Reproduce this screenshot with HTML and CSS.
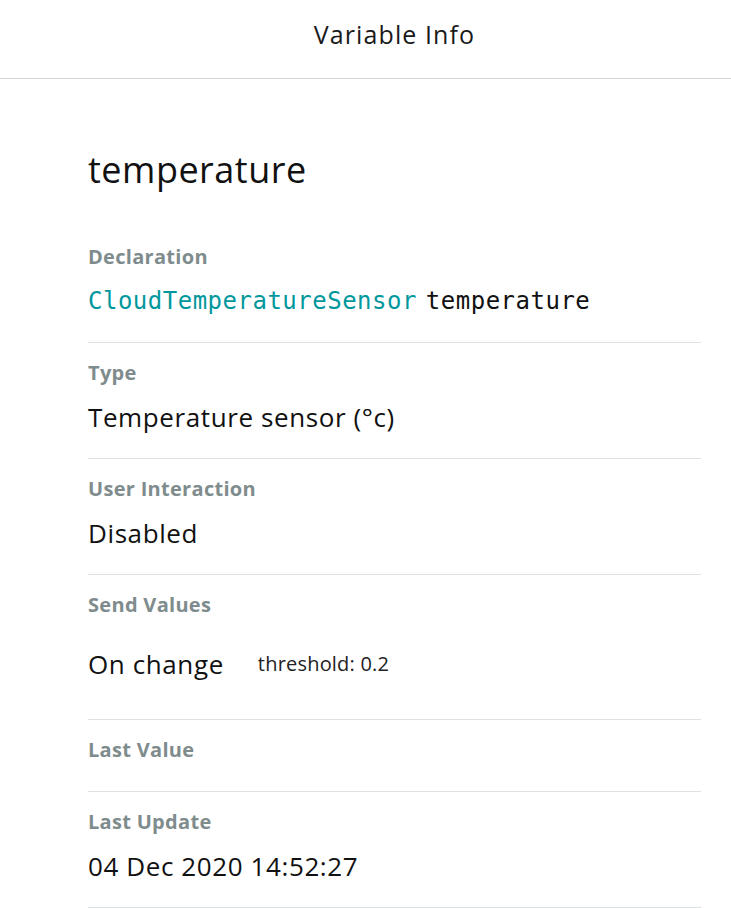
FILE: index.html
```html
<!DOCTYPE html>
<html lang="en">
<head>
<meta charset="utf-8">
<title>Variable Info</title>
<link rel="stylesheet" href="styles.css">
</head>
<body>
<header class="topbar">
  <h1 class="topbar-title">Variable Info</h1>
</header>
<main class="content">
  <h2 class="var-name">temperature</h2>
  <section class="field">
    <div class="field-label">Declaration</div>
    <div class="field-value code"><span class="code-type">CloudTemperatureSensor</span> temperature</div>
  </section>
  <section class="field">
    <div class="field-label">Type</div>
    <div class="field-value">Temperature sensor (°c)</div>
  </section>
  <section class="field">
    <div class="field-label">User Interaction</div>
    <div class="field-value">Disabled</div>
  </section>
  <section class="field">
    <div class="field-label">Send Values</div>
    <div class="field-value send-row"><span>On change</span><span class="threshold">threshold: 0.2</span></div>
  </section>
  <section class="field field-empty">
    <div class="field-label">Last Value</div>
  </section>
  <section class="field">
    <div class="field-label">Last Update</div>
    <div class="field-value">04 Dec 2020 14:52:27</div>
  </section>
</main>
</body>
</html>
```
FILE: styles.css
```css
* { box-sizing: border-box; }
html, body { margin: 0; padding: 0; background: #fff; }
body {
  font-family: "Open Sans", "Noto Sans", sans-serif;
  color: #1a1a1a;
}
.topbar {
  height: 79px;
  padding-left: 58px;
  border-bottom: 1px solid #d4d4d4;
  display: flex;
  align-items: flex-start;
  justify-content: center;
}
.topbar-title {
  margin: 17px 0 0;
  font-size: 25px;
  line-height: 34px;
  font-weight: 400;
  letter-spacing: 1.1px;
  color: #1a1a1a;
}
.content {
  padding: 0 30px 0 88px;
}
.var-name {
  margin: 67px 0 33px;
  font-size: 36px;
  line-height: 48px;
  font-weight: 400;
  letter-spacing: 0.5px;
  color: #111;
}
.field {
  padding: 16px 0 25px;
  border-bottom: 1px solid #dde3e3;
}
.field-empty { padding-bottom: 27px; }
.field-label {
  font-size: 20px;
  line-height: 28px;
  font-weight: 700;
  letter-spacing: 0.3px;
  color: #7f8c8d;
}
.field-value {
  margin-top: 14px;
  font-size: 26px;
  line-height: 32px;
  letter-spacing: 0.6px;
  color: #111;
}
.code {
  font-family: "DejaVu Sans Mono", "Liberation Mono", monospace;
  font-size: 24px;
  letter-spacing: 0.5px;
  word-spacing: -6px;
}
.code-type { color: #00979d; }
.send-row {
  height: 61px;
  display: flex;
  align-items: center;
  gap: 34px;
}
.threshold {
  font-size: 20px;
  letter-spacing: 0.2px;
  color: #222;
}
```
